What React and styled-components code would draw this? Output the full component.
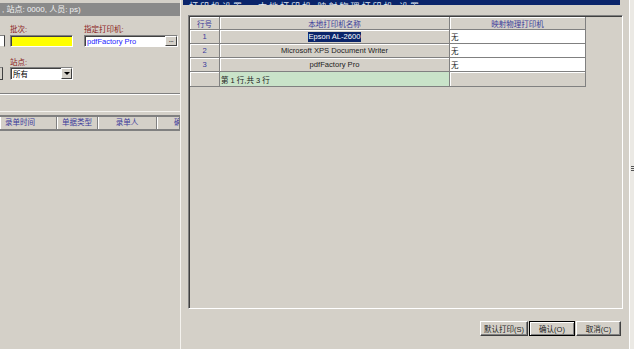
import React from "react";
import styled, { createGlobalStyle } from "styled-components";

const GlobalStyle = createGlobalStyle`
  html, body {
    margin: 0;
    padding: 0;
    background: #d4d0c8;
  }
  body {
    font-family: "Liberation Sans", "Noto Sans CJK SC", sans-serif;
  }
`;

const FONT = `"Liberation Sans", "Noto Sans CJK SC", sans-serif`;

const Screen = styled.div`
  width: 634px;
  height: 349px;
  display: flex;
  background: #d4d0c8;
  overflow: hidden;
  font-size: 8px;
  color: #000;
`;

/* ---------- left panel ---------- */

const LeftPanel = styled.div`
  width: 180px;
  flex: none;
  border-right: 1px solid #f4f2ee;
  display: flex;
  flex-direction: column;
  padding-top: 3px;
`;

const StatusBar = styled.div`
  height: 13px;
  background: #8a8a8a;
  color: #f2f2f2;
  font-size: 8px;
  line-height: 13px;
  padding-left: 2px;
  white-space: nowrap;
  overflow: hidden;
`;

const Row = styled.div`
  display: flex;
  align-items: center;
  height: ${p => p.$h}px;
  margin-top: ${p => p.$mt || 0}px;
  padding-left: ${p => p.$pl || 0}px;
`;

const Label = styled.div`
  color: #8b1a1a;
  font-size: 7.5px;
  width: ${p => (p.$w ? `${p.$w}px` : "auto")};
  white-space: nowrap;
`;

const Stub = styled.div`
  box-sizing: border-box;
  width: ${p => p.$w}px;
  height: 100%;
  margin-right: ${p => p.$mr}px;
  background: ${p => (p.$white ? "#fff" : "#d4d0c8")};
  border-right: 1px solid #404040;
  border-top: 1px solid #808080;
  border-bottom: 1px solid ${p => (p.$white ? "#d4d0c8" : "#404040")};
`;

const Field = styled.div`
  box-sizing: border-box;
  width: ${p => p.$w}px;
  height: 100%;
  margin-right: ${p => p.$mr || 0}px;
  background: ${p => p.$bg || "#fff"};
  border: 1px solid;
  border-color: #808080 #fff #fff #808080;
  box-shadow: inset 1px 1px #404040;
  display: flex;
  align-items: center;
  padding-left: 2px;
  color: ${p => p.$color || "#000"};
  font-size: 7.5px;
  white-space: nowrap;
  overflow: hidden;
`;

const FieldText = styled.span`
  flex: 1;
`;

const MiniButton = styled.div`
  box-sizing: border-box;
  width: 12px;
  height: 10px;
  background: #d4d0c8;
  border: 1px solid;
  border-color: #fff #404040 #404040 #fff;
  font-size: 7px;
  line-height: 6px;
  text-align: center;
  color: #000;
  letter-spacing: -0.5px;
`;

const Arrow = styled.div`
  box-sizing: border-box;
  width: 11px;
  height: 100%;
  background: #d4d0c8;
  border: 1px solid;
  border-color: #fff #404040 #404040 #fff;
  display: flex;
  align-items: center;
  justify-content: center;
  &::after {
    content: "";
    border-left: 3px solid transparent;
    border-right: 3px solid transparent;
    border-top: 3px solid #000;
  }
`;

const Rule = styled.div`
  margin-top: ${p => p.$mt}px;
  border-top: 1px solid #808080;
  border-bottom: 1px solid #fff;
`;

const LightRule = styled.div`
  margin-top: ${p => p.$mt}px;
  height: 1px;
  background: #f4f2ee;
`;

const ListHeader = styled.div`
  margin-top: 3px;
  display: grid;
  grid-template-columns: 57px 41px 59px 1fr;
  height: 12px;
  border-top: 2px solid #808080;
  border-bottom: 2px solid #808080;
`;

const ListHead = styled.div`
  box-sizing: border-box;
  color: #3a3a9a;
  font-size: 7.5px;
  line-height: 12px;
  text-align: ${p => p.$align || "center"};
  padding-left: ${p => p.$pl || 0}px;
  border-right: 1px solid #808080;
  box-shadow: inset 1px 0 #fff;
  white-space: nowrap;
  overflow: hidden;
`;

/* ---------- dialog ---------- */

const Dialog = styled.div`
  width: 446px;
  flex: none;
  margin-left: 1px;
  padding-left: 1px;
  display: flex;
  flex-direction: column;
`;

const TitleBar = styled.div`
  width: 437px;
  height: 5px;
  background: #0a246a;
  overflow: hidden;
  display: flex;
  align-items: flex-end;
  padding-left: 6px;
  box-sizing: border-box;
`;

const TitleText = styled.div`
  color: #dfe4f0;
  font-size: 9px;
  line-height: 9px;
  margin-bottom: -7px;
  white-space: nowrap;
  letter-spacing: 2px;
`;

const GridPanel = styled.div`
  box-sizing: border-box;
  margin: 10px 0 0 5px;
  width: 435px;
  height: 294px;
  border: 1px solid;
  border-color: #808080 #fff #fff #808080;
  box-shadow: inset 1px 1px #404040;
  padding: 1px 0 0 1px;
`;

const Table = styled.div`
  display: grid;
  grid-template-columns: 30px 230px 136px;
  grid-template-rows: 13px 14px 14px 14px 15px;
  width: 396px;
`;

const Cell = styled.div`
  box-sizing: border-box;
  border-right: 1px solid #808080;
  border-bottom: 1px solid #808080;
  background: ${p => p.$bg || "#d4d0c8"};
  box-shadow: ${p => (p.$raised ? "inset 1px 1px #fff" : "none")};
  padding-left: ${p => p.$pl || 0}px;
  color: ${p => p.$color || "#222"};
  font-size: ${p => p.$fs || 7.6}px;
  display: flex;
  align-items: center;
  justify-content: ${p => (p.$align === "left" ? "flex-start" : "center")};
  white-space: nowrap;
  overflow: hidden;
`;

const Selected = styled.span`
  background: #0a246a;
  color: #fff;
  padding: 0 1px;
  line-height: 10px;
`;

const ButtonRow = styled.div`
  display: flex;
  justify-content: flex-end;
  gap: 1px;
  margin-top: 12px;
  padding-right: 8px;
`;

const Button = styled.div`
  box-sizing: border-box;
  width: ${p => p.$w}px;
  height: 15px;
  background: #d4d0c8;
  border: 1px solid;
  border-color: ${p => (p.$default ? "#000" : "#fff #404040 #404040 #fff")};
  box-shadow: ${p =>
    p.$default ? "inset 1px 1px #fff, inset -1px -1px #808080" : "inset -1px -1px #808080"};
  font-family: ${FONT};
  font-size: 7.5px;
  color: #222;
  display: flex;
  align-items: center;
  justify-content: center;
  white-space: nowrap;
`;

/* ---------- right strip ---------- */

const RightStrip = styled.div`
  flex: 1;
  border-left: 1px solid #fff;
  background: #ebe9e4;
  display: flex;
  align-items: center;
  padding-left: 1px;
`;

const Handle = styled.div`
  width: 3px;
  height: 6px;
  margin-top: -12px;
  background: repeating-linear-gradient(#555 0 1px, transparent 1px 2px);
`;

const rows = [
  { no: 1, name: "Epson AL-2600", selected: true },
  { no: 2, name: "Microsoft XPS Document Writer" },
  { no: 3, name: "pdfFactory Pro" },
];

export default function App() {
  return (
    <Screen>
      <GlobalStyle />
      <LeftPanel>
        <StatusBar>, 站点: 0000, 人员: ps)</StatusBar>
        <Row $h={9} $mt={8} $pl={10}>
          <Label $w={74}>批次:</Label>
          <Label>指定打印机:</Label>
        </Row>
        <Row $h={12} $mt={2}>
          <Stub $w={5} $mr={5} $white />
          <Field $w={63} $mr={11} $bg="#ffff00" />
          <Field $w={94} $color="#1a1aff">
            <FieldText>pdfFactory Pro</FieldText>
            <MiniButton>...</MiniButton>
          </Field>
        </Row>
        <Row $h={8} $mt={10} $pl={10}>
          <Label>站点:</Label>
        </Row>
        <Row $h={13} $mt={2}>
          <Stub $w={3} $mr={7} />
          <Field $w={63}>
            <FieldText>所有</FieldText>
            <Arrow />
          </Field>
        </Row>
        <Rule $mt={13} />
        <LightRule $mt={16} />
        <ListHeader>
          <ListHead $align="left" $pl={5}>录单时间</ListHead>
          <ListHead>单据类型</ListHead>
          <ListHead>录单人</ListHead>
          <ListHead $align="left" $pl={17}>确认</ListHead>
        </ListHeader>
      </LeftPanel>

      <Dialog>
        <TitleBar>
          <TitleText>打印机设置  -  本地打印机  映射物理打印机  设置</TitleText>
        </TitleBar>
        <GridPanel>
          <Table>
            <Cell $raised $color="#3a3a9a" $fs={7.5}>行号</Cell>
            <Cell $raised $color="#3a3a9a" $fs={7.5}>本地打印机名称</Cell>
            <Cell $raised $color="#3a3a9a" $fs={7.5}>映射物理打印机</Cell>
            {rows.map(r => (
              <React.Fragment key={r.no}>
                <Cell $raised $color="#3a3a9a">{r.no}</Cell>
                <Cell $raised>
                  {r.selected ? <Selected>{r.name}</Selected> : r.name}
                </Cell>
                <Cell $bg="#fff" $align="left" $pl={1} $fs={7.5}>无</Cell>
              </React.Fragment>
            ))}
            <Cell $raised />
            <Cell $bg="#c9e3c9" $align="left" $pl={1} $fs={7.5}>第 1 行,共 3 行</Cell>
            <Cell $raised />
          </Table>
        </GridPanel>
        <ButtonRow>
          <Button $w={48}>默认打印(S)</Button>
          <Button $w={46} $default>确认(O)</Button>
          <Button $w={45}>取消(C)</Button>
        </ButtonRow>
      </Dialog>

      <RightStrip>
        <Handle />
      </RightStrip>
    </Screen>
  );
}
